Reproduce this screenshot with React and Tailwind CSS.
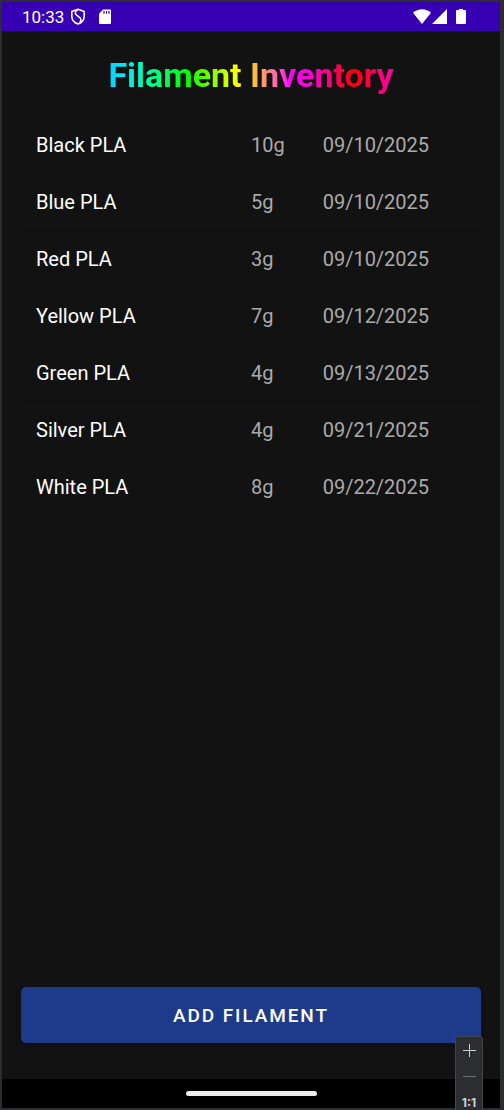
import React from 'react';

const filaments = [
  { name: 'Black PLA', grams: '10g', date: '09/10/2025' },
  { name: 'Blue PLA', grams: '5g', date: '09/10/2025' },
  { name: 'Red PLA', grams: '3g', date: '09/10/2025' },
  { name: 'Yellow PLA', grams: '7g', date: '09/12/2025' },
  { name: 'Green PLA', grams: '4g', date: '09/13/2025' },
  { name: 'Silver PLA', grams: '4g', date: '09/21/2025' },
  { name: 'White PLA', grams: '8g', date: '09/22/2025' },
];

function StatusBar() {
  return (
    <div className="flex h-[29px] items-center bg-[#3700b3] pr-[34px] pl-5 text-white">
      <span className="text-[17px] leading-5">10:33</span>
      <svg className="ml-[6px] h-[18px] w-4" viewBox="0 0 16 18" fill="none" stroke="currentColor" strokeWidth="1.6" strokeLinejoin="round" aria-hidden="true">
        <path d="M8 1.200 14.200 3.400V8.200C14.200 12 11.400 14.800 8 16 4.600 14.800 1.800 12 1.800 8.200V3.400Z" />
        <path d="M7.600 1.600C4.200 4.400 4.600 6.200 8 8.200 11.600 10.400 11.400 12.400 9.800 14.800" />
      </svg>
      <svg className="ml-[13px] h-4 w-3" viewBox="0 0 12 16" aria-hidden="true">
        <path fill="currentColor" d="M4.200 .5H11Q12 .5 12 1.500V14Q12 15 11 15H1Q0 15 0 14V4.700Z" />
        <path stroke="#3700b3" strokeWidth="1.200" d="M5 2V4.800M7.500 2V4.800M10 2V4.800" />
      </svg>
      <div className="ml-auto flex items-center">
        <svg className="h-4 w-[18px]" viewBox="0 0 18 16" fill="currentColor" aria-hidden="true">
          <path d="M9 15 0 3.800C5 -.9 13 -.9 18 3.800Z" />
        </svg>
        <svg className="ml-px h-4 w-[15px]" viewBox="0 0 15 16" fill="currentColor" aria-hidden="true">
          <path d="M15 0V15H0Z" />
        </svg>
        <svg className="ml-[9px] h-4 w-[10px]" viewBox="0 0 10 16" fill="currentColor" aria-hidden="true">
          <path d="M3 0H7V1H9Q10 1 10 2V14Q10 15 9 15H1Q0 15 0 14V2Q0 1 1 1H3Z" />
        </svg>
      </div>
    </div>
  );
}

function ZoomControls() {
  return (
    <div className="absolute right-[21px] bottom-0 flex h-[74px] w-7 flex-col items-center overflow-hidden rounded-t border border-b-0 border-[#43454a] bg-[#2b2d30] text-[#ced0d6]">
      <button type="button" aria-label="Zoom in" className="flex h-[26px] w-full shrink-0 items-center justify-center">
        <svg className="h-[13px] w-[13px]" viewBox="0 0 13 13" stroke="currentColor" aria-hidden="true">
          <path d="M6.500 0V13M0 6.500H13" />
        </svg>
      </button>
      <button type="button" aria-label="Zoom out" className="flex h-[26px] w-full shrink-0 items-center justify-center text-[#6f7177]">
        <svg className="h-[13px] w-[13px]" viewBox="0 0 13 13" stroke="currentColor" aria-hidden="true">
          <path d="M0 6.500H13" />
        </svg>
      </button>
      <button type="button" className="mt-1 h-5 w-full shrink-0 font-['Inter',sans-serif] text-xs leading-5 font-bold">
        1:1
      </button>
    </div>
  );
}

export default function App() {
  return (
    <div className="relative flex min-h-screen flex-col bg-[#2b2d30] pt-[2px] pr-1 pb-[2px] pl-[2px] font-['Roboto',sans-serif]">
      <div className="flex grow flex-col bg-[#121212]">
        <StatusBar />
        <main className="flex grow flex-col px-[19px] pb-9">
          <h1 className="mx-auto mt-6 bg-[linear-gradient(90deg,#00d0ff_0%,#00e5ff_4%,#00ffa0_14%,#00ff00_28%,#80ff00_36%,#ffff00_45%,#ffaa55_53%,#ff66b0_59%,#ff00ff_64%,#ff00d0_72%,#ff0060_79%,#ff0000_86%,#ff0099_98%)] bg-clip-text text-[34px] leading-10 font-bold text-transparent">
            Filament Inventory
          </h1>
          <table className="mt-[22px] block w-full text-xl">
            <tbody className="block">
              {filaments.map((f) => (
                <tr key={f.name} className="grid h-[57px] grid-cols-[3fr_1fr_2fr] items-center border-b border-[#101010] px-[15px] text-left text-[#aaaaaa]">
                  <th scope="row" className="font-normal text-white">{f.name}</th>
                  <td>{f.grams}</td>
                  <td>{f.date}</td>
                </tr>
              ))}
            </tbody>
          </table>
          <button type="button" className="mt-auto h-14 w-full rounded-[5px] bg-[#1e3a8a] pt-[2px] text-[19px] font-medium tracking-widest text-white shadow-md">
            ADD FILAMENT
          </button>
        </main>
        <div className="flex h-[29px] items-center justify-center bg-black">
          <div className="h-[5px] w-[131px] rounded-full bg-[#ebebeb]" />
        </div>
      </div>
      <ZoomControls />
    </div>
  );
}
